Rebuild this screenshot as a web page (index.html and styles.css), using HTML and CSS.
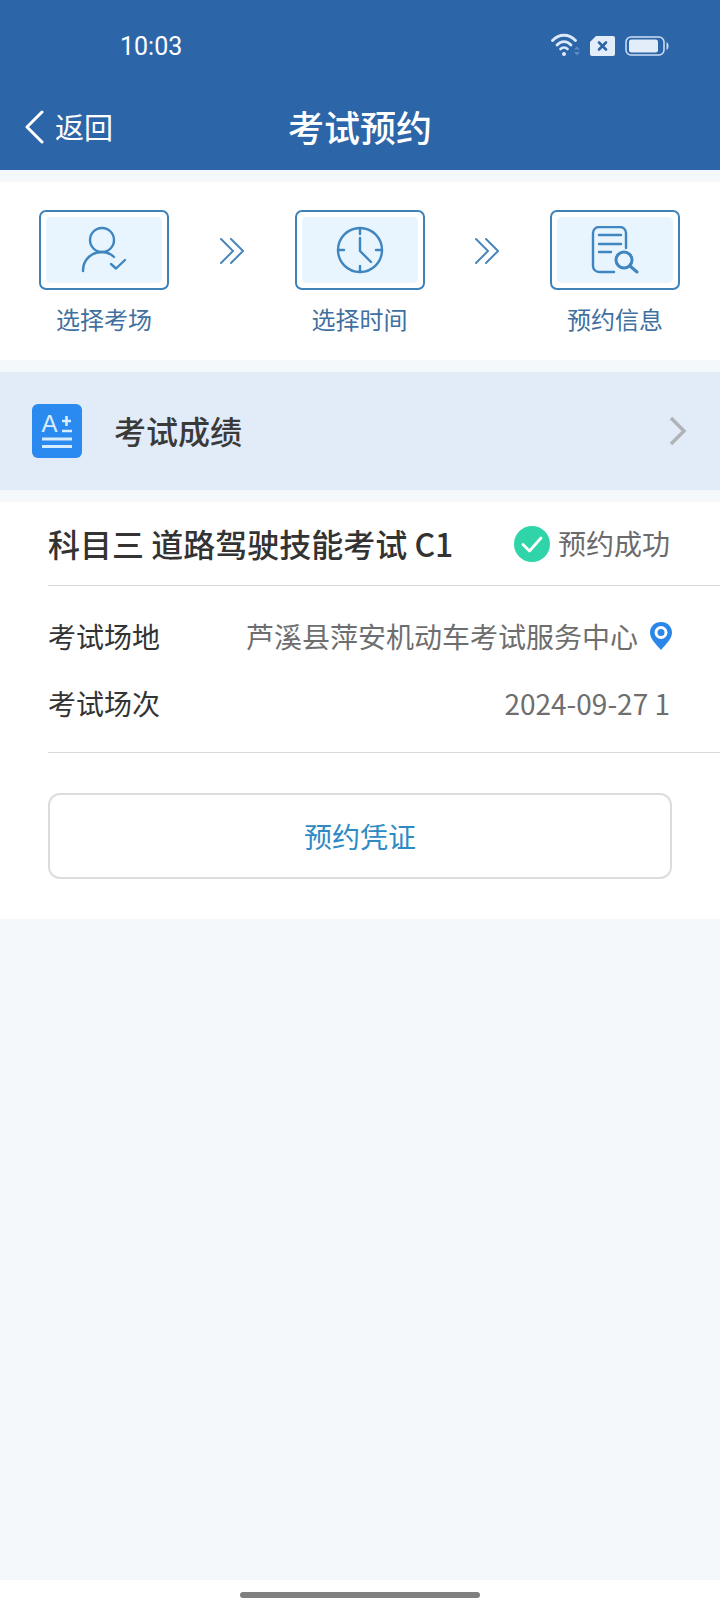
FILE: index.html
```html
<!DOCTYPE html>
<html lang="zh-CN">
<head>
  <meta charset="UTF-8">
  <meta name="viewport" content="width=device-width, initial-scale=1.0">
  <title>考试预约</title>
  <link rel="stylesheet" href="styles.css">
</head>
<body>
  <header class="header">
    <div class="status-bar">
      <span class="time">10:03</span>
      <div class="status-icons">
        <svg class="wifi" width="29" height="24" viewBox="0 0 29 24" fill="none" stroke="#dce9f8" stroke-linecap="round">
          <path d="M1.500 7.500 C8 0.500 18 0.500 24.500 7.500" stroke-width="2.800"/>
          <path d="M6 12 C10 7.500 16 7.500 20 12" stroke-width="2.800"/>
          <path d="M9.500 16 C11.500 14 14.500 14 16.500 16" stroke-width="2.600"/>
          <circle cx="13" cy="21" r="2" fill="#dce9f8" stroke="none"/>
          <path d="M23 16.500 L26 13.500 L29 16.500 Z M23 19 L29 19 L26 22.500 Z" fill="#5a8cc6" stroke="none"/>
        </svg>
        <svg class="sim" width="25" height="20" viewBox="0 0 25 20">
          <path d="M6 0 H23 a2 2 0 0 1 2 2 V18 a2 2 0 0 1 -2 2 H2 a2 2 0 0 1 -2 -2 V6 Z" fill="#e3edf9"/>
          <path d="M9 6.500 L16 13.500 M16 6.500 L9 13.500" stroke="#2d65a9" stroke-width="2.600" stroke-linecap="round"/>
        </svg>
        <svg class="battery" width="44" height="20" viewBox="0 0 44 20" fill="none">
          <rect x="1" y="1" width="38" height="18" rx="5" stroke="#cfe0f5" stroke-width="1.500"/>
          <rect x="4" y="3.500" width="29" height="13" rx="2.500" fill="#e3edf9"/>
          <path d="M41.500 6 C43 7 43.500 8 43.500 10 C43.500 12 43 13 41.500 14 Z" fill="#cfe0f5"/>
        </svg>
      </div>
    </div>
    <div class="nav-bar">
      <div class="back">
        <svg width="20" height="34" viewBox="0 0 20 34" fill="none" stroke="#fff" stroke-width="3" stroke-linecap="round" stroke-linejoin="round">
          <path d="M18 2 L3 17 L18 32"/>
        </svg>
        <span>返回</span>
      </div>
      <h1 class="title">考试预约</h1>
    </div>
  </header>

  <section class="steps">
    <div class="step">
      <div class="step-box">
        <div class="step-inner">
          <svg width="48" height="48" viewBox="0 0 48 48" fill="none" stroke="#3f86c0" stroke-width="2.400" stroke-linecap="round" stroke-linejoin="round">
            <circle cx="22" cy="14" r="12"/>
            <path d="M3 45 C3 33 12 26 22 26 C27 26 31 28 34 31"/>
            <path d="M31 38 L36 42.500 L45 34"/>
          </svg>
        </div>
      </div>
      <span class="step-label">选择考场</span>
    </div>
    <svg class="step-arrow" width="24" height="26" viewBox="0 0 24 26" fill="none" stroke="#4a86bb" stroke-width="2" stroke-linecap="round">
      <path d="M1 1 L13 13 L1 25"/>
      <path d="M11 1 L23 13 L11 25"/>
    </svg>
    <div class="step">
      <div class="step-box">
        <div class="step-inner">
          <svg width="48" height="48" viewBox="0 0 48 48" fill="none" stroke="#3f86c0" stroke-width="2.400" stroke-linecap="round" stroke-linejoin="round">
            <circle cx="24" cy="24" r="22"/>
            <path d="M24 2 V8 M24 40 V46 M2 24 H8 M40 24 H46"/>
            <path d="M24 12 V25 L35 36"/>
          </svg>
        </div>
      </div>
      <span class="step-label">选择时间</span>
    </div>
    <svg class="step-arrow" width="24" height="26" viewBox="0 0 24 26" fill="none" stroke="#4a86bb" stroke-width="2" stroke-linecap="round">
      <path d="M1 1 L13 13 L1 25"/>
      <path d="M11 1 L23 13 L11 25"/>
    </svg>
    <div class="step">
      <div class="step-box">
        <div class="step-inner">
          <svg width="48" height="48" viewBox="0 0 48 48" fill="none" stroke="#3f86c0" stroke-width="2.400" stroke-linecap="round" stroke-linejoin="round">
            <path d="M23 46 H8 a6 6 0 0 1 -6 -6 V7 a6 6 0 0 1 6 -6 H29 a6 6 0 0 1 6 6 V22"/>
            <path d="M8 9 H30 M8 18 H30 M8 26 H20"/>
            <circle cx="33" cy="34" r="8" stroke-width="3"/>
            <path d="M39 40 L46 46" stroke-width="3"/>
          </svg>
        </div>
      </div>
      <span class="step-label">预约信息</span>
    </div>
  </section>

  <section class="score-row">
    <div class="score-left">
      <svg class="score-icon" width="50" height="54" viewBox="0 0 50 54">
        <rect width="50" height="54" rx="6" fill="#2a8af0"/>
        <text x="9.500" y="28" class="score-a">A</text>
        <path d="M30 17 H39 M34.500 12 V22 M30 27 H40" stroke="#d6ecff" stroke-width="2.600"/>
        <path d="M10 35 H40 M10 42.500 H40" stroke="#d6ecff" stroke-width="3"/>
      </svg>
      <span class="score-text">考试成绩</span>
    </div>
    <svg width="18" height="30" viewBox="0 0 18 30" fill="none" stroke="#b0b4b8" stroke-width="3.500">
      <path d="M2 2 L15 15 L2 28"/>
    </svg>
  </section>

  <section class="card">
    <div class="card-head">
      <span class="card-title">科目三 道路驾驶技能考试 C1</span>
      <div class="card-status">
        <svg width="36" height="36" viewBox="0 0 36 36" fill="none">
          <circle cx="18" cy="18" r="18" fill="#2fd5a8"/>
          <path d="M9 18.500 L15.500 25 L27 12" stroke="#fff" stroke-width="2.800" stroke-linecap="round" stroke-linejoin="round"/>
        </svg>
        <span>预约成功</span>
      </div>
    </div>
    <div class="card-info">
      <div class="info-row">
        <span class="info-label">考试场地</span>
        <div class="info-value">
          <span>芦溪县萍安机动车考试服务中心</span>
          <svg class="pin" width="22" height="28" viewBox="0 0 22 28">
            <path d="M11 0 C4.500 0 0 4.700 0 10.500 C0 17 6 22 11 28 C16 22 22 17 22 10.500 C22 4.700 17.500 0 11 0 Z" fill="#2a86e8"/>
            <circle cx="11" cy="10.500" r="6.500" fill="#fff"/>
            <circle cx="11" cy="10.500" r="3.500" fill="#2a86e8"/>
          </svg>
        </div>
      </div>
      <div class="info-row">
        <span class="info-label">考试场次</span>
        <span class="info-value">2024-09-27 1</span>
      </div>
    </div>
    <button class="voucher-btn">预约凭证</button>
  </section>

  <div class="page-fill"></div>

  <footer class="home-area">
    <div class="home-bar"></div>
  </footer>
</body>
</html>
```

FILE: styles.css
```css
* {
  box-sizing: border-box;
}
body {
  margin: 0;
  width: 720px;
  height: 1612px;
  display: flex;
  flex-direction: column;
  background: #f4f8fa;
  font-family: "Noto Sans CJK SC", "Noto Sans", sans-serif;
  color: #333;
}

/* header */
.header {
  height: 170px;
  background: #2d65a9;
  color: #fff;
  flex-shrink: 0;
}
.status-bar {
  height: 90px;
  padding: 33px 51px 0 120px;
  display: flex;
  justify-content: space-between;
  align-items: flex-start;
}
.time {
  font-family: Roboto, sans-serif;
  font-size: 25px;
  line-height: 24px;
  margin-top: 2px;
}
.status-icons {
  display: flex;
  align-items: center;
  gap: 10px;
  height: 24px;
}
.status-icons .sim {
  margin-top: 2px;
}
.status-icons .battery {
  margin-top: 2px;
}
.nav-bar {
  position: relative;
  height: 80px;
  display: flex;
  align-items: center;
  justify-content: center;
}
.back {
  position: absolute;
  left: 24px;
  top: 20px;
  display: flex;
  align-items: center;
  gap: 11px;
  font-size: 29px;
  line-height: 34px;
}
.back span {
  margin-top: -3px;
}
.title {
  margin: 0 0 8px;
  font-size: 36px;
  line-height: 68px;
  font-weight: 500;
}

/* steps */
.steps {
  margin-top: 12px;
  height: 178px;
  padding: 28px 40px 0 39px;
  background: #fff;
  display: flex;
  justify-content: space-between;
  align-items: flex-start;
  flex-shrink: 0;
}
.step {
  width: 130px;
  display: flex;
  flex-direction: column;
  align-items: center;
}
.step-box {
  width: 130px;
  height: 80px;
  padding: 5px;
  border: 2px solid #3f82b8;
  border-radius: 7px;
}
.step-inner {
  height: 100%;
  background: #e8f4fe;
  border-radius: 5px;
  display: flex;
  align-items: center;
  justify-content: center;
}
.step-label {
  margin-top: 12px;
  font-size: 24px;
  line-height: 34px;
  color: #3f709f;
}
.step-arrow {
  margin-top: 28px;
}

/* score row */
.score-row {
  margin-top: 12px;
  height: 118px;
  padding: 0 33px 0 32px;
  background: #e1ecf8;
  display: flex;
  align-items: center;
  justify-content: space-between;
  flex-shrink: 0;
}
.score-left {
  display: flex;
  align-items: center;
  gap: 32px;
}
.score-a {
  font-family: "Liberation Sans", sans-serif;
  font-size: 24px;
  fill: #d6ecff;
}
.score-text {
  font-size: 32px;
  line-height: 40px;
  font-weight: 500;
  color: #3a3a3a;
  margin-top: -2px;
}

/* card */
.card {
  margin-top: 12px;
  padding: 0 0 40px 48px;
  background: #fff;
  flex-shrink: 0;
}
.card-head {
  height: 84px;
  padding-right: 50px;
  border-bottom: 1px solid #d8d8d8;
  display: flex;
  align-items: center;
  justify-content: space-between;
}
.card-title {
  font-size: 32px;
  line-height: 40px;
  font-weight: 500;
  color: #333;
  margin-top: -2px;
}
.card-status {
  display: flex;
  align-items: center;
  gap: 8px;
  font-size: 28px;
  color: #6b6b6b;
}
.card-status span {
  margin-top: -2px;
}
.card-info {
  padding: 16px 50px 16px 0;
  border-bottom: 1px solid #d8d8d8;
}
.info-row {
  height: 67px;
  display: flex;
  align-items: center;
  justify-content: space-between;
  font-size: 28px;
}
.info-label {
  color: #333;
}
.info-value {
  display: flex;
  align-items: center;
  gap: 12px;
  color: #6e6e6e;
}
.info-value .pin {
  margin-right: -2px;
}
.voucher-btn {
  display: block;
  width: 624px;
  height: 86px;
  margin-top: 40px;
  background: #fff;
  border: 2px solid #dcdcdc;
  border-radius: 12px;
  font-family: inherit;
  font-size: 28px;
  color: #2f8ac4;
}

.page-fill {
  flex: 1;
}

/* home indicator */
.home-area {
  height: 32px;
  padding-top: 12px;
  background: #fff;
  flex-shrink: 0;
}
.home-bar {
  width: 240px;
  height: 6px;
  margin: 0 auto;
  background: #808080;
  border-radius: 3px;
}
```
